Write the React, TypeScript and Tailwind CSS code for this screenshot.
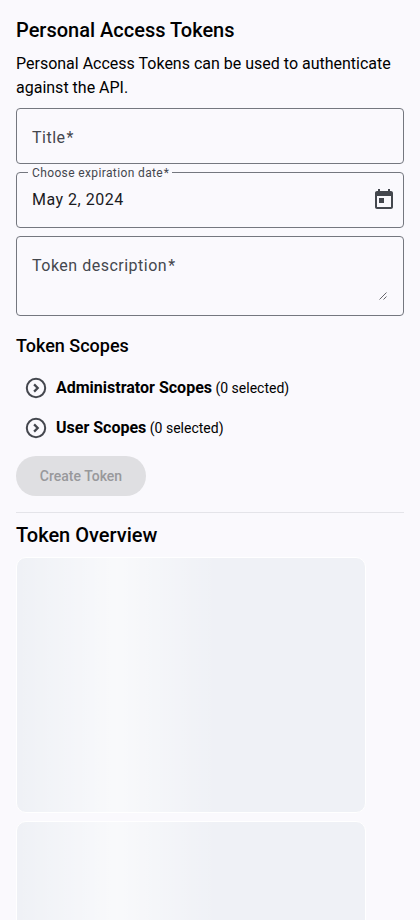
function ChevronCircle() {
  return (
    <svg className="mb-px block size-6 text-[#44474e]" viewBox="0 0 24 24" fill="none" stroke="currentColor" strokeWidth="2">
      <circle cx="12" cy="12" r="9.2" />
      <path d="M10.1 8.4 13.7 12l-3.6 3.6" strokeWidth="2.3" />
    </svg>
  );
}

function ScopeRow({ name }: { name: string }) {
  return (
    <div className="flex h-10 items-center pl-2">
      <ChevronCircle />
      <div className="ml-2 text-base leading-6 text-black">
        <span className="font-bold">{name}</span>
        <span className="text-sm"> (0 selected)</span>
      </div>
    </div>
  );
}

function SkeletonCard() {
  return (
    <div className="h-64 w-[350px] shrink-0 rounded-[10px] border border-white bg-[#eff1f6] bg-[linear-gradient(90deg,rgba(255,255,255,0),rgba(255,255,255,0.6),rgba(255,255,255,0))] bg-[length:200px_100%] bg-no-repeat" />
  );
}

export default function App() {
  return (
    <main className="flex h-[920px] w-full flex-col overflow-hidden bg-[#faf9fd] px-4 pt-4 font-['Roboto',sans-serif] text-black">
      <h1 className="text-xl leading-7 font-medium">Personal Access Tokens</h1>
      <p className="mt-2 text-base leading-6">
        Personal Access Tokens can be used to authenticate against the API.
      </p>

      <div className="mt-2 flex h-14 shrink-0 rounded border border-[#74777f] px-[15px] pt-[17px] text-base leading-6 tracking-[0.5px] text-[#44474e]">
        Title<span className="ml-px">*</span>
      </div>

      <div className="relative mt-2 flex h-14 shrink-0 items-center justify-between rounded border border-[#74777f] pr-[7px] pl-[15px]">
        <span className="absolute -top-2 left-[11px] bg-[#faf9fd] pr-[3px] pl-1 text-xs leading-4 tracking-[0.375px] text-[#44474e]">
          Choose expiration date<span className="ml-[0.75px]">*</span>
        </span>
        <span className="text-base leading-6 tracking-[0.5px] text-[#1a1b1f]">May 2, 2024</span>
        <svg className="size-6 text-[#44474e]" viewBox="0 0 24 24" fill="currentColor">
          <path d="M19 3h-1V1h-2v2H8V1H6v2H5c-1.11 0-1.99.9-1.99 2L3 19c0 1.1.89 2 2 2h14c1.1 0 2-.9 2-2V5c0-1.1-.9-2-2-2zm0 16H5V8h14v11zM7 10h5v5H7z" />
        </svg>
      </div>

      <div className="mt-2 flex h-20 shrink-0 justify-between rounded border border-[#74777f] pr-4 pl-[15px]">
        <span className="mt-[17px] text-base leading-6 tracking-[0.5px] text-[#44474e]">
          Token description<span className="ml-px">*</span>
        </span>
        <svg className="mb-[15px] size-2 self-end text-[#55555a]" viewBox="0 0 8 8" stroke="currentColor" strokeWidth="0.9">
          <path d="M.5 7.5l7-7M4.5 7.5l3-3" />
        </svg>
      </div>

      <h2 className="mt-4 text-lg leading-7 font-medium">Token Scopes</h2>
      <div className="mt-2">
        <ScopeRow name="Administrator Scopes" />
        <ScopeRow name="User Scopes" />
      </div>

      <button
        disabled
        className="mt-2 h-10 w-[130px] shrink-0 rounded-full bg-[#dfdfe2] text-sm font-medium text-[#98989b]"
      >
        Create Token
      </button>

      <hr className="mt-4 border-t border-[#e4e4e9]" />

      <h2 className="mt-2 text-xl leading-7 font-medium">Token Overview</h2>
      <div className="mt-2 flex flex-col gap-2">
        <SkeletonCard />
        <SkeletonCard />
      </div>
    </main>
  );
}
